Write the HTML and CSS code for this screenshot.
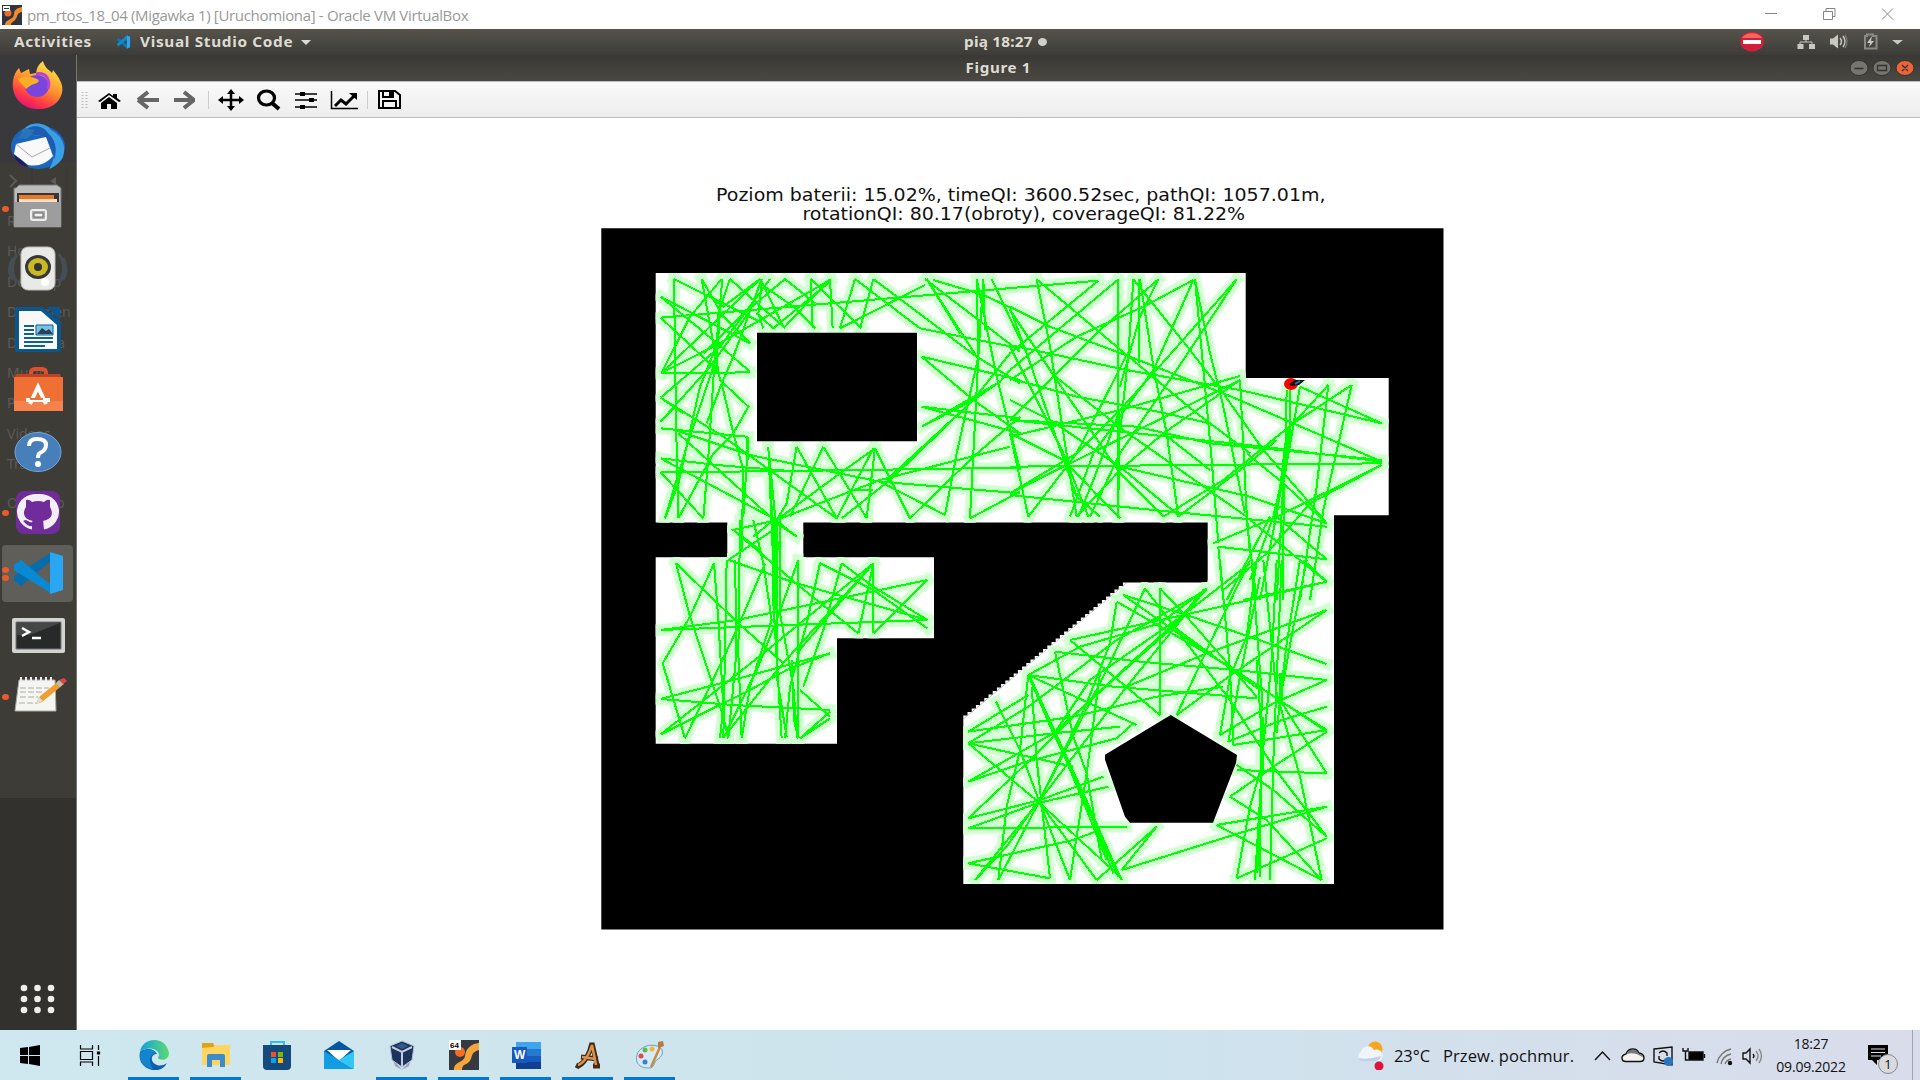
FILE: index.html
```html
<!DOCTYPE html>
<html lang="pl">
<head>
<meta charset="utf-8">
<title>pm_rtos_18_04 (Migawka 1) [Uruchomiona] - Oracle VM VirtualBox</title>
<link rel="stylesheet" href="styles.css">
</head>
<body>
<header class="host-title">
  <svg class="vm-icon" viewBox="0 0 20 20"><path fill="#303440" d="M0 0h20v20H0z"/><path fill="#f58a2a" d="M3 20c0-6 9-5 9-11 0-4 3-6 8-7v5c-6 1-4 5-7 8-2 2-4 2-4 5z"/><circle cx="6" cy="8" r="3.5" fill="#f36b21"/><path fill="#fff" d="M1 1h7v5H1z"/><path stroke="#333" d="M2 3.5h5"/></svg>
  <span class="host-name">pm_rtos_18_04 (Migawka 1) [Uruchomiona] - Oracle VM VirtualBox</span>
  <svg class="host-controls" viewBox="0 0 140 29" fill="none" stroke="#858585"><path d="M1 13.500h12M59.500 11.500h9v8h-9zM62 11V8.500h9v8h-2M118 8.500l11 11m0-11-11 11"/></svg>
</header>

<div class="gnome-bar">
  <span class="activities"><b>Activities</b></span>
  <svg class="code-mini" viewBox="0 0 100 100"><path fill="#0877bd" d="M4 28 15 20 75 70V98L4 38z"/><path fill="#0a8bd7" d="M4 72 15 80 75 30V2L4 62z"/><path fill="#29a8f2" d="M74 2 97 13v74L74 98z"/></svg>
  <span class="app-name"><b>Visual Studio Code</b></span>
  <i class="caret"></i>
  <span class="clock"><b>pią 18:27</b></span><i class="dot"></i>
  <svg class="indicators" viewBox="0 0 180 26">
    <ellipse cx="12" cy="12.500" rx="12" ry="10" fill="#d3203a"/><path d="M2 9a10.500 7 0 0 1 20 0z" fill="#ee6a5c"/><path d="M3 11h18v4H3z" fill="#fff"/>
    <g fill="#c9c7c1"><path d="M63 6h6v5h-6zM57.500 15h6v5h-6zM69 15h6v5h-6z"/><path d="M60 15v-2h12v2M66 10v3" fill="none" stroke="#c9c7c1"/><path d="M90 9.500h3l5-4v14l-5-4h-3z"/><path d="M100 9q3 3.500 0 7M103 7q4 5.500 0 11" fill="none" stroke="#c9c7c1" stroke-width="1.500"/><path d="M105 6q4 6.500 0 13" fill="none" stroke="#77756d" stroke-width="1.500"/><path d="M125 7h2V5.500h6V7h3.500v12.500H125z" fill="none" stroke="#8c8a83" stroke-width="2"/><path d="m132 7-5 7h3l-1 4 5-6h-3z"/><path d="M152 11h11l-5.500 4.500z"/></g>
  </svg>
</div>

<div class="guest">
  <aside class="dock">
    <div class="ghost"><span>Recent</span><span>Home</span><span>Desktop</span><span>Documen</span><span>Downloa</span><span>Music</span><span>Pictures</span><span>Videos</span><span>Trash</span><span class="other">Other Lo</span></div>
    <svg class="ghost-arrows" viewBox="0 0 76 36"><path d="m10 9 6 6-6 6" fill="none" stroke="#5c5a55" stroke-width="2"/><path d="m56 11-6 4 6 4z" fill="#5c5a55"/><path d="M32 0v34M67 0v34" stroke="#383733"/></svg>
    <div class="slot"><svg viewBox="0 0 60 52"><defs><linearGradient id="fx" x1=".8" y1="0" x2=".3" y2="1"><stop stop-color="#fff04a"/><stop offset=".5" stop-color="#ff922e"/><stop offset=".8" stop-color="#ff3647"/><stop offset="1" stop-color="#e3117d"/></linearGradient></defs><path fill="url(#fx)" d="M5 22Q6 14 11 9l2 5 8-4 1 5 6-1c1-6 3-9 7-12 2 8 7 9 9 12l1-3c6 7 11 15 9 23-3 12-15 17-26 16C14 49 3 38 5 22z"/><ellipse cx="29" cy="27" rx="12" ry="11" fill="#7845dd"/><path fill="#ffad24" d="M10 20c7-3 12-3 19 0 3 1 2 4-3 5-4 1-5 3-8 5-3-5-7-6-8-10z"/><path d="M28 15c9-2 15 4 12 15" fill="none" stroke="#b843d6" stroke-width="3"/></svg></div>
    <div class="slot"><svg viewBox="0 0 60 52"><ellipse cx="30" cy="27" rx="27" ry="22" fill="#1b66bd"/><path fill="#3aa0e6" d="M14 12C20 0 38 2 43 10c10 5 16 15 12 27-3 6-9 10-14 12 6-8 7-21-2-30-8-6-18-2-25-7z"/><path fill="#1d5cb0" d="M20 8c8-4 16-1 20 5 7 6 10 16 6 27-1-9-3-17-9-22-6-4-13-2-19-5z"/><path fill="#f9f9fa" d="m8 24 30-7 7 19q-10 12-25 9L6 34z"/><path d="m8 24 16 13 18-9" fill="none" stroke="#a5a5a7"/><path fill="#1e1d63" d="M5 34q8 5 16 13Q9 46 5 34z"/><path fill="#2873b9" d="m10 18 7-10 10 2-8 9z"/></svg></div>
    <div class="slot lower"><i class="run"></i><svg viewBox="0 0 60 52"><path fill="#bcbcbc" stroke="#777" d="m8 6 3-3h38l4 3v39H6V6z"/><path fill="#383632" d="M9 11h42v12H9z"/><path fill="#e87727" d="M11 13h35v8H11z"/><path fill="#f8dec3" d="M11 17h38v5H11z"/><path fill="#9d9d9d" d="M7 20h46v25H7z"/><rect x="23" y="28" width="15" height="10" rx="2" fill="#aaa" stroke="#eee" stroke-width="2"/><path fill="#f2f2f2" stroke="#666" d="M26 31h9v4h-9z"/></svg></div>
    <div class="slot"><svg viewBox="0 0 60 52"><path d="M9 12q-9 14 0 29M51 12q9 14 0 29M5 16q-7 12 0 22M55 16q6 12 0 22" stroke="#454e54" stroke-width="3" fill="none"/><rect x="13" y="5" width="34" height="43" rx="7" fill="#e9e9e7" stroke="#bbb"/><ellipse cx="30" cy="25" rx="13" ry="12" fill="#383838"/><ellipse cx="30" cy="25" rx="10" ry="9" fill="#c9ba24"/><circle cx="30" cy="25" r="4" fill="#333"/><circle cx="37" cy="40" r="4" fill="#fff"/></svg></div>
    <div class="slot lower"><svg viewBox="0 0 60 52"><path fill="#0a568d" d="M10 3h25l18 15v27q0 3-3 3H10q-3 0-3-3V6q0-3 3-3zM39 3h13v13z"/><path fill="#f8f8f8" d="M11 7h22l16 14v24H11z"/><path stroke="#145d91" stroke-width="2" d="M16 22h10M16 26h10M16 30h10M16 34h29M16 38h29M16 42h21"/><path fill="#79c3e8" stroke="#145d91" d="M28 21h17v10H28z"/><path fill="#24445a" d="m29 30 5-6 4 3 3-2 4 5z"/></svg></div>
    <div class="slot lower"><svg viewBox="0 -1 60 52"><path d="M23 14V7q0-4 4-4h7q4 0 4 4v7" fill="none" stroke="#dc512a" stroke-width="4"/><path fill="#bf4226" d="m8 8-2 5h48l-2-5z"/><path fill="#ee7035" d="M6 11h49v34H6z"/><path fill="#f5814d" d="M6 35h49v10H6z"/><path d="m22 38 8-17 8 17M18 34h24" fill="none" stroke="#fff" stroke-width="4"/><path d="M22 33h13" stroke="#ed6f35" stroke-width="2"/></svg></div>
    <div class="slot lower"><svg viewBox="0 0 60 52"><ellipse cx="30" cy="26" rx="23" ry="19.500" fill="#477fba" stroke="#75a6d6"/><path d="M21 20q0-7 8-7 9 0 9 6 0 5-6 8-2 1-2 5" fill="none" stroke="#fff" stroke-width="4"/><circle cx="30" cy="38" r="3" fill="#fff"/></svg></div>
    <div class="slot"><i class="run"></i><svg viewBox="0 1 60 52"><rect x="8" y="6" width="44" height="43" rx="8" fill="#702c9b"/><path fill="#f4eff6" d="M30 9a19 18 0 0 0-6 35.500v-5c-5 1-6-2-8-4 4-1 4 2 8 2l1-3h10l1 10A19 18 0 0 0 30 9z"/><path fill="#702c9b" d="M18 15q3-1 6 2 6-2 12 0 3-3 6-2v7c5 9-1 13-7 14v9H25v-4c-6 1-7-3-10-5 4-1 5 2 10 2v-2c-7-1-12-6-7-14z"/></svg></div>
    <div class="slot active"><i class="run two"></i><svg viewBox="0 0 60 52"><path fill="#066dad" d="m6 34 7 5 31-26V5L6 29z"/><path fill="#0989d4" d="m6 18 7-5 31 26v8L6 23z"/><path fill="#2aa7f4" d="m42 5 13 4v34l-13 4z"/></svg></div>
    <div class="slot lower"><svg viewBox="0 0 60 52"><rect x="4" y="9" width="53" height="35" rx="2" fill="#d3d3d1"/><path fill="#272a29" stroke="#777" d="M8 13h45v27H8z"/><path fill="#444746" d="M9 14h43L22 26H9z"/><path d="m14 19 7 4-7 4M24 29h9" fill="none" stroke="#fff" stroke-width="2.500"/></svg></div>
    <div class="slot lower"><i class="run"></i><svg viewBox="0 0 60 52"><path fill="#f5f5f1" stroke="#aaa" d="M11 10h36l1 31H7z"/><path d="M13 7v5M18 7v5M23 7v5M28 7v5M33 7v5M38 7v5M43 7v5" stroke="#eee" stroke-width="2"/><path d="M12 18h29M12 22h24M12 27h18M11 33h17" stroke="#aaa" stroke-dasharray="6 2"/><path fill="#ef9e31" d="m28 34 3-7 21-17 4 4-22 18z"/><path fill="#ddd" d="m28 34 3-7 4 4z"/><path fill="#bbb" d="m48 13 3-3 4 4-3 3z"/><path fill="#e0444c" d="m51 10 5-2 3 3-4 3z"/></svg></div>
    <svg class="apps" viewBox="0 0 40 34" fill="#eee"><circle cx="6" cy="6" r="3.300"/><circle cx="19.500" cy="6" r="3.300"/><circle cx="33" cy="6" r="3.300"/><circle cx="6" cy="17" r="3.300"/><circle cx="19.500" cy="17" r="3.300"/><circle cx="33" cy="17" r="3.300"/><circle cx="6" cy="28" r="3.300"/><circle cx="19.500" cy="28" r="3.300"/><circle cx="33" cy="28" r="3.300"/></svg>
  </aside>

  <main class="figure-window">
    <div class="figure-title"><span></span><b>Figure 1</b>
      <svg viewBox="0 0 68 20"><g stroke="#34332f"><ellipse cx="10" cy="10" rx="9" ry="7.500" fill="#77756e"/><ellipse cx="33" cy="10" rx="9" ry="7.500" fill="#77756e"/><ellipse cx="56" cy="10" rx="9" ry="7.500" fill="#ed6438"/><path d="M5.500 10.500h9M28.500 7.500h9v5h-9zM53 7l6 6m0-6-6 6" fill="none" stroke-width="1.300"/></g></svg>
    </div>
    <div class="toolbar">
      <svg viewBox="0 1 340 36">
        <path d="M5.500 11v16M9.500 11v16" stroke="#bbb" stroke-width="2" stroke-dasharray="1 2"/>
        <path d="m21 20 11-8 4 3v-2h4v4l4 3-2 1-10-7-9 7zM24 22l8-6 8 6v6h-6v-5h-4v5h-6z"/>
        <path d="m61 19 10-8M61 19h21M61 19l10 8" fill="none" stroke="#666" stroke-width="4"/>
        <path d="m117 19-10-8M118 19H97M117 19l-10 8" fill="none" stroke="#666" stroke-width="4"/>
        <path d="M131.500 10v18M290.500 10v18" stroke="#ccc"/>
        <path d="M144 19h20M154 10v18" stroke="#000" stroke-width="2.500"/><path d="m141 19 5-4v8zm26 0-5-4v8zM154 8l-4 5h8zm0 22-4-5h8z"/>
        <ellipse cx="189.500" cy="17" rx="8" ry="7" fill="none" stroke="#000" stroke-width="3.200"/><path d="m195 22 7 6" stroke="#000" stroke-width="4"/>
        <path d="M218 13h22M218 19h22M218 26h22" stroke="#000" stroke-width="1.500"/><path d="M223 11h5v4h-5zM232 17h5v4h-5zM223 24h5v4h-5z"/>
        <path d="M254.500 10v17.500H281" fill="none" stroke="#000" stroke-width="1.500"/><path d="m258 25 6-6 5 4 9-9" fill="none" stroke="#000" stroke-width="3"/><path d="M272 12h8v7z"/>
        <path d="M302 10h16l5 4v13h-21zM306 10v6h10v-6M306 27v-7h13v7" fill="none" stroke="#000" stroke-width="2"/><path d="M312 11h3v4h-3z"/>
      </svg>
    </div>
    <div class="canvas">
      <svg class="plot" viewBox="590 180 870 760">
        <defs>
          <clipPath id="floor"><path d="M655.700 273H1245.700V378H1388.700V515.300H1334V884H963.300V719L1127.300 582.300H1207.700V522.500H803.300V557.300H934V638.300H837V743.700H655.700V557.300H727.300V522.500H655.700Z"/></clipPath>
          <path id="stairs" class="room" d="M0 0v-3.500h4.200zm4.200-3.500v-3.500h4.200zm4.200-3.500v-3.500h4.200zm4.200-3.500v-3.500h4.200zm4.200-3.500v-3.500h4.200zm4.200-3.500v-3.500h4.200zm4.200-3.500v-3.500h4.200zm4.200-3.500v-3.500h4.200zm4.200-3.500v-3.500h4.200zm4.200-3.500v-3.500h4.200zm4.200-3.500v-3.500h4.200zm4.200-3.500v-3.500h4.200zm4.200-3.500v-3.500h4.200z"/>
          <g id="tracks" fill="none">
            <path transform="translate(590 170) scale(.33333)" d="M252 327L258 750L265 1045M252 327L510 455M212 380L480 520M212 380L370 510L480 605M212 443L1525 332M212 443L370 590M212 610L480 607M215 608L300 440L395 327M215 608L380 525L720 330M215 608L510 327M212 683L390 530L540 327M212 683L400 800L740 1045M212 755L360 590L475 430M212 683L280 730M212 755L255 710M212 775L470 800L475 870M212 865L380 885L600 903L1290 893M212 865L550 1045M212 907L600 903M212 907L340 1045M265 790L540 1040M255 780L480 855L870 935L1290 970M225 1045L265 940L330 650L380 525M265 1045L370 850L430 790L475 710L390 630L335 327M340 1045L355 860L372 600L397 327M390 420L378 610M225 1045L290 830L370 590M335 327L400 440L480 520M420 327L385 430L380 610M420 327L580 470M510 327L400 410L360 380M515 327L430 560L395 640L350 760M515 335L580 470M585 327L450 440L340 550M585 327L675 400M662 327L668 475M662 327L815 475M720 327L728 475M720 327L580 475M720 335L550 475L500 430M675 475L610 410L510 340M795 327L750 475M850 327L810 475M795 327L990 475L1290 535M850 327L1160 560L1290 640M750 475L1005 345M1005 327L1290 545M1030 330L1180 375L1260 412M395 640L430 790L460 900L455 1140M475 800L460 1040M535 830L548 1140M538 860L565 1140M540 900L550 1130M515 340L505 430L520 475M620 830L590 1000L560 1050M620 830L740 1045M700 830L600 1040M700 830L830 1045M855 835L750 910L560 1050M855 835L830 1045M855 835L960 1045M850 835L740 1045M960 1045L1150 860L1290 740M1065 1035L1100 850L1165 560L1180 327M870 935L1065 1035M560 1050L870 930L1260 830M1140 1045L1150 850L1165 560L1160 330M1140 1045L1290 965M995 560L1290 630M995 560L1150 690L1290 790M995 710L1290 745M995 710L1290 790M995 770L1230 635L1260 600M995 770L1150 690M755 1045L900 930L1150 690L1260 550M890 930L1150 690L1230 635M1010 327L1160 560M1015 335L1110 490M1205 327L1310 550M1160 327L1220 620L1290 900M1180 327L1185 480M780 960H850M560 1050L430 1080L510 1140M550 1045L620 1100M490 1100L550 1050"/>
            <path transform="translate(1010 220) scale(.33333)" d="M265 182L0 400M325 178L120 350L0 450M325 178V895M328 580V810M80 178L120 380L160 640L200 890M80 178L350 405L560 580L720 700M0 260L120 320L360 410L640 520L850 610L1115 725M0 265L50 400L200 830L270 890M370 178L355 405L330 640M388 178V430M370 178L540 390L640 520M445 178L270 330L0 600M445 178L390 290L330 500M390 178L430 440L470 640L505 890M550 180L400 260L200 350L0 480M550 180L430 450L250 700L180 890M555 178L600 400L640 560L705 880M555 178L585 500L605 720L625 970M680 178L430 460L330 570L200 700L0 820M680 178L540 390L330 700L240 890M690 468L330 570L0 650M690 480L460 640L330 750L200 890M690 480L710 880L720 1000M610 970L800 890L1115 735M625 980L950 1018M0 375L350 450L690 510L1115 610M830 510L825 740L790 890L720 1080M840 510L840 640L800 880L750 1140M835 620L822 770L795 890M830 640L800 890M870 500L1115 610M870 500L820 790L800 1140M822 790L818 1140M955 495L850 610M955 495L920 800L870 1140M1025 495L850 610L640 780L460 890M1025 495L940 870L900 1140M0 600L380 620L600 670L1115 720M0 740L1115 730M0 825L430 870L950 920M0 820L160 740L690 480M1115 725L760 680L475 650L0 600M55 890L0 640M55 890L200 700L350 405M205 890L250 780L330 570M235 890L160 700L0 380M460 890L330 760L130 465L0 270M505 890L690 750L800 660M0 475L200 530L420 570L600 610M130 465L340 630L710 890M330 740L720 830L950 910M0 540L120 600L330 740L510 890M640 520L760 690L900 850L950 910M460 640L600 750M710 700L820 790L950 910M720 900L950 1085M800 890L950 1018M950 1085L700 1140M625 980L640 1140M710 900L740 1140M640 1110L770 1000L900 850L1115 735M780 890L650 1140M0 640L160 720L330 895"/>
            <path transform="translate(590 520) scale(.33333)" d="M258 130L300 290L400 590L415 655M258 130L440 305L580 430M372 130L300 290L218 430L285 655M372 130L385 300L400 560L390 655M285 655L440 330L525 130M212 330L440 300L1012 180M212 330L600 315L1012 300M212 537L430 480L720 400M212 537L430 555L720 570M212 643L520 400L850 130M212 643L480 510L590 450M410 120L400 655M435 120L440 390L415 655M450 0L445 400L455 655M415 120L620 190L1012 300M430 30L560 0M430 30L630 200L805 340M415 120L550 30M490 0L520 130L545 300L480 500L455 655M548 0L550 250L575 655M555 0V270M560 0L562 480L590 650M570 0L570 280L610 500L622 655M605 420L612 600L625 655M437 250V400M625 120L560 300L500 450L400 655M625 120V655M690 130L650 310L600 500L585 655M690 130L850 210L1012 325M755 130L700 330L640 500M755 130L850 200L1012 300M850 130L805 340M850 130V340M850 340L1012 180M850 130L570 440L410 640M850 130L620 400M630 510L720 590M630 655L720 575M630 655L720 595M590 450L720 400M560 10L620 50"/>
            <path transform="translate(940 560) scale(.33333)" d="M390 240L730 165L930 120L1160 65M390 240L660 465M660 85V465M345 275L600 305L890 330L1160 360M345 275L400 530L440 640L485 900M265 345L520 380L950 415M265 345L590 495M265 345L340 520L430 700L520 940M270 350L345 520L432 730L500 900M275 370L360 560L440 730L545 960M280 375L375 590L460 780L535 950M285 385L430 700L530 930M265 345L240 570L200 740L175 960M275 380L290 600L330 955M168 425L240 570L300 730L390 960M85 515L265 405M85 515L400 470L650 410L850 380M85 550L265 440L530 240L800 90M85 550L400 620M85 550L300 730L470 960M300 730L540 950M85 550L340 520L540 500M85 665L340 520L700 200L790 90M85 665L260 605L530 535L580 490M85 775L265 605L440 430L730 165L930 10M85 775L300 720L490 650M85 805L290 730L505 680M85 805L560 800M85 910L400 840L480 810M85 910L330 955M105 960L300 720L440 430L510 250L530 125M105 960L200 860L310 700M175 960L310 700L500 330L615 85M390 960L410 830L440 640L480 340M470 960L650 800M545 930L650 800M545 930L880 825L1160 740M530 125L870 320L1025 425L1160 515M550 105L700 210L880 330M550 105L740 165L1000 255L1160 312M615 85L870 420L1000 620L1160 830M660 85L740 170L950 410M800 85L660 190L420 260L265 345M800 85L560 380L300 720M710 465L800 270L930 0M710 465L880 340L1160 150M560 380L800 280L1160 150M840 525L870 350L920 230L950 0M840 525L1000 430L1160 360M865 545L900 350L960 50M865 545L1025 480L1160 440M880 555L1160 510M880 555L870 330L840 0M890 615L1000 690L1160 830M890 630L1160 640M870 710L1000 620L1160 515M870 710L980 780L1145 960M830 795L980 770L1160 740M830 795L1145 960M890 955L1160 835M890 955L930 740L970 600L950 300M945 960L970 560L995 300L1010 0M968 470V640M964 600L955 920M950 940L965 640M990 960L1000 600L1025 0M960 950L965 400L935 0M1145 960L1080 650L1010 400L970 0M1100 0L1060 200L1020 420L1010 520M1080 0L1040 250L1020 420L1160 640M1020 340V425M1026 340V425M1090 0L1160 65M1025 425L1160 510M700 200L850 310L960 390M350 510L450 360L730 165"/>
          </g>
        </defs>
        <path class="wall" d="M601.300 228.300H1443.500V929.500H601.300z"/>
        <path class="room" d="M655.700 273H1245.700V378H1388.700V515.300H1334V884H963.300V719L1127.100 582.500H1207.700V522.500H803.300V557.300H934V638.300H837V743.700H655.700V557.300H727.300V522.500H655.700Z"/>
        <use href="#stairs" x="963.300" y="719"/><use href="#stairs" x="1017.900" y="673.500"/><use href="#stairs" x="1072.500" y="628"/>
        <g clip-path="url(#floor)"><use href="#tracks" class="halo-edge"/><use href="#tracks" class="halo"/><use href="#tracks" class="line"/></g>
        <path class="wall" d="M757 332.700h160v108.600H757zM1170.700 715l66.300 40-1 8-23 59.700h-83l-5-6-20-57v-5z"/>
        <ellipse cx="1291" cy="384" rx="7" ry="6" fill="red"/><path d="m1289 384 6-4 10 0-6 5-8 1z" fill="#111"/><path d="m1295 384 5-3" stroke="#2179b5" stroke-width="2"/>
        <text x="716" y="200.500" textLength="609.500" lengthAdjust="spacingAndGlyphs">Poziom baterii: 15.02%, timeQI: 3600.52sec, pathQI: 1057.01m,</text>
        <text x="802.500" y="219.500" textLength="442.500" lengthAdjust="spacingAndGlyphs">rotationQI: 80.17(obroty), coverageQI: 81.22%</text>
      </svg>
    </div>
  </main>
</div>

<footer class="taskbar">
  <div class="task start"><svg viewBox="0 0 30 30"><path d="m5 8 8-1v8H5zM14 7l11-2v10H14zM5 16h8v8l-8-1zM14 16h11v10l-11-2z"/></svg></div>
  <div class="task view"><svg viewBox="0 0 30 30" fill="none" stroke="#000" stroke-width="1.200"><path d="M5.500 5v4h12V5M5.500 11.500h12v8h-12zM5.500 26v-4h12v4M23.500 5v5M23.500 16v10"/><path fill="#000" d="M22.500 12h2v2h-2z"/></svg></div>
  <div class="task open"><svg viewBox="0 0 30 30"><defs><linearGradient id="eg"><stop stop-color="#159fe0"/><stop offset="1" stop-color="#59db70"/></linearGradient></defs><path fill="#0c61ac" d="M1 12c6-5 14-3 17 2-6 0-7 7-2 10 5 3 9 1 12-1-3 6-9 8-15 7C4 28-1 21 1 12z"/><path fill="url(#eg)" d="M1 12C3-3 27-5 30 13c0 6-5 8-10 6-2-1 0-2 0-5-2-6-12-8-19-2z"/><path fill="#1484ce" d="M1 13c6-6 14-4 16 0-7 2-8 9-3 16C4 28 0 21 1 13z"/></svg></div>
  <div class="task open"><svg viewBox="0 0 30 30"><path fill="#e2a313" d="M1 3h11l2 4v4H1z"/><path fill="#ffd561" d="M1 8 12 7l3-2h14v20H1z"/><path fill="#398ccc" d="M6 27V16q0-2 2-2h14q2 0 2 2v11h-5v-7h-8v7z"/></svg></div>
  <div class="task"><svg viewBox="0 0 30 30"><path d="M9 8V2h13v6" fill="none" stroke="#31bef3" stroke-width="2"/><path fill="#174a7c" d="M1 5h28v21q0 4-4 4H5q-4 0-4-4z"/><path fill="#f25022" d="M9 12h5v5H9z"/><path fill="#7fba00" d="M16 12h5v5h-5z"/><path fill="#00a4ef" d="M9 18h5v5H9z"/><path fill="#ffb900" d="M16 18h5v5h-5z"/></svg></div>
  <div class="task"><svg viewBox="0 0 30 30"><path fill="#0757a0" d="M0 11 15 1l15 10v9H0z"/><path fill="#fff" d="M3 10h24L15 21z"/><path fill="#129de2" d="M0 11l30 18H0z"/><path fill="#31c6f4" d="M30 11v18L15 20z"/></svg></div>
  <div class="task open"><svg viewBox="0 0 30 30"><path fill="#9aa5b5" d="M6 19 15 30l9-11-2 7-7 4-7-4z"/><path fill="#1d355c" stroke="#b3c1d3" d="m3 6 12-5 12 5-2 14-10 7-10-7z"/><path d="m5 7 10 5 10-5M15 12v14" stroke="#c1cede" fill="none" stroke-width="2"/><path fill="#345987" d="m9 6 6-3 6 3-6 3z"/></svg></div>
  <div class="task open"><svg viewBox="0 0 30 30"><path fill="#353a42" d="M0 0h30v30H0z"/><path fill="#f6a53b" d="M5 30c0-9 10-7 11-14C17 8 22 4 30 3v7c-9 2-6 8-10 12-3 3-7 2-7 8z"/><circle cx="11" cy="12" r="5" fill="#f56e24"/><path fill="#fff" d="M0 0h12v10H0z"/><text x="1" y="8" class="tiny">64</text></svg></div>
  <div class="task open"><svg viewBox="0 0 30 30"><path fill="#2479d0" d="M5 2h25v27H5z"/><path fill="#41a5ee" d="M5 2h25v7H5z"/><path fill="#185abd" d="M5 16h25v7H5z"/><path fill="#103f91" d="M5 22h25v7H5z"/><path fill="#185abd" d="M1 7h15v16H1z"/><text x="3" y="19" class="word">W</text></svg></div>
  <div class="task open"><svg viewBox="0 0 30 30"><path d="M4 26c7-1 13-13 15-23l5 22M8 17l17 2M3 25l4 2M20 26h7" fill="none" stroke="#462813" stroke-width="5"/><path d="M5 25c7-2 12-13 14-20l4 20M9 17l14 2" fill="none" stroke="#d8954e" stroke-width="2.500"/></svg></div>
  <div class="task open"><svg viewBox="0 0 30 30"><path fill="#d6eaf7" stroke="#6a9dc0" d="M2 22C-1 10 11 3 22 6c9 3 5 11 1 13-5 3-3 9-9 9-7 0-10-2-12-6z"/><circle cx="6" cy="16" r="2.500" fill="#e24848"/><circle cx="10" cy="10" r="2.500" fill="#63bd45"/><circle cx="17" cy="9" r="2.500" fill="#edbd2d"/><circle cx="10" cy="22" r="2.500" fill="#3482d4"/><path d="M16 27 25 7" stroke="#c88b42" stroke-width="2.500"/><path fill="#b27a46" d="m23 8 0-6 5-1 1 5z"/></svg></div>
  <div class="weather">
    <svg viewBox="0 0 28 30"><circle cx="19" cy="9" r="7.500" fill="#f9a51e"/><path fill="#f0f5fc" d="M5 21a5 5 0 0 1 0-9 7 7 0 0 1 13-2 6 6 0 0 1 5 11z"/><path fill="#bfd0ea" d="M2 18q10 2 23-2-1 5-6 5H6q-3 0-4-3z"/><circle cx="23" cy="26" r="4.500" fill="#df1237"/></svg>
    <span class="temp">23°C</span><span class="forecast">Przew. pochmur.</span>
  </div>
  <svg class="tray" viewBox="0 0 180 30" fill="none" stroke="#111" stroke-width="1.400">
    <path d="m3 19 7.500-8 7.500 8"/><path fill="#f3f3f1" d="M34 20.500q-4 0-4-3.500 0-3 4-4 2-5 7-5 4 0 6 4 5 1 5 5 0 3.500-4 3.500z"/><path fill="#777" stroke="none" d="M34.500 13q2-4.500 6.500-4.500 4 0 5.500 4 4 1 4.500 4-8-6-16.500-3.500z"/>
    <path d="m62 8 18-2v18l-18-3zM67 12q4-4 8 0v3M75 18q-4 4-8 0v-3"/><circle cx="76.500" cy="20.500" r="4.500" fill="#2876bd" stroke="none"/>
    <path fill="#000" d="M97 11h14v8H97z"/><path d="M112.500 13v4M91 7v3h5V7M93.500 10v9h3"/>
    <path d="M125 22A18 18 0 0 1 139 8M129 23A13 13 0 0 1 139 13M133 23A8 8 0 0 1 139 18" stroke="#777"/><circle cx="138" cy="22" r="1.500" fill="#111"/>
    <path d="M151 12h3l4-4v14l-4-4h-3z"/><path d="M161 13q2 2 0 4"/><path d="M164 10q4 5 0 10M167 8q5 7 0 14" stroke="#888"/>
  </svg>
  <div class="time"><span>18:27</span><span>09.09.2022</span></div>
  <div class="notice"><svg viewBox="0 0 22 22"><path d="M1 1h20v15H10v5l-5-5H1z"/><path d="M4 5h14M4 8.500h14M4 12h10" stroke="#d8dfeb"/></svg><b>1</b></div>
  <i class="peek"></i>
</footer>
</body>
</html>
```
FILE: styles.css
```css
* { box-sizing: border-box; }
body { margin: 0; width: 1920px; height: 1080px; overflow: hidden; display: flex; flex-direction: column; background: #fff; font-family: "Open Sans", "Noto Sans", sans-serif; }
svg { display: block; flex: none; }
.host-title { height: 29px; flex: none; display: flex; align-items: center; padding-left: 2px; color: #999; font-size: 15px; }
.vm-icon { width: 20px; height: 20px; margin-right: 5px; }
.host-name { letter-spacing: -0.33px; white-space: nowrap; }
.host-controls { width: 140px; height: 29px; margin-left: auto; margin-right: 16px; }
.gnome-bar { height: 26px; flex: none; display: flex; align-items: center; padding-left: 14px; background: linear-gradient(#55534b, #3d3c38); color: #dfdbd2; font: 13.5px "Noto Sans", sans-serif; letter-spacing: .6px; white-space: nowrap; }
.gnome-bar b { display: inline-block; transform: scaleX(1.135); transform-origin: left; }
.activities { width: 101px; }
.code-mini { width: 17px; height: 14px; margin-right: 8px; }
.app-name { width: 155px; }
.caret { border: 5px solid transparent; border-top-color: #dfdbd2; border-bottom: 0; margin-left: 6px; }
.clock { margin-left: 653px; width: 71px; letter-spacing: .2px; }
.dot { width: 9px; height: 8px; border-radius: 50%; background: #d2d0ca; margin-left: 3px; }
.indicators { width: 180px; height: 26px; margin-left: auto; }
.guest { height: 975px; flex: none; display: flex; }
.dock { position: relative; width: 77px; flex: none; display: flex; flex-direction: column; border-right: 1px solid #77756f; background: linear-gradient(#39383a 0 107px, #3e3c37 107px 743px, #32312d 743px); }
.ghost { position: absolute; left: 7px; top: 151px; width: 69px; display: flex; flex-direction: column; color: #5b5a55; font: 14px/30.4px "Noto Sans", sans-serif; white-space: nowrap; }
.other { margin-top: 8px; }
.ghost-arrows { position: absolute; left: 0; top: 111px; width: 76px; height: 36px; }
.slot { position: relative; top: -1px; height: 61px; flex: none; display: flex; align-items: center; justify-content: center; }
.slot svg { width: 60px; height: 52px; }
.slot.lower { top: 0; }
.slot.active::before { content: ""; position: absolute; left: 2px; top: 3px; width: 71px; height: 57px; border-radius: 4px; background: #605e59; }
.slot.active svg { position: relative; }
.run { position: absolute; z-index: 1; left: 2px; top: 29px; width: 7px; height: 6px; border-radius: 50%; background: #ea5b29; }
.run.two { top: 25px; box-shadow: 0 8px #ea5b29; }
.apps { width: 40px; height: 34px; margin: auto 0 14px 18px; }
.figure-window { flex: 1; display: flex; flex-direction: column; }
.figure-title { height: 26px; flex: none; display: grid; grid-template-columns: 1fr auto 1fr; align-items: center; background: linear-gradient(#393834, #4a4842); color: #dfdbd2; font: 13.5px "Noto Sans", sans-serif; letter-spacing: .6px; }
.figure-title b { transform: scaleX(1.12); }
.figure-title svg { width: 68px; height: 20px; justify-self: end; margin-right: 3px; }
.toolbar { height: 37px; flex: none; border-top: 1px solid #bbb; border-bottom: 1px solid #bcbcbc; background: linear-gradient(#fafafa, #ededed); }
.toolbar svg { width: 340px; height: 36px; }
.canvas { flex: 1; padding: 62px 0 0 513px; background: #fff; }
.plot { width: 870px; height: 760px; }
.plot text { font: 17px "DejaVu Sans", sans-serif; fill: #111; }
.wall { fill: #000; }
.room { fill: #fff; }
.halo-edge { stroke: #e5ffe5; stroke-width: 37px; stroke-linejoin: round; stroke-linecap: square; }
.halo { stroke: #d1ffd1; stroke-width: 31px; stroke-linejoin: round; stroke-linecap: square; }
.line { stroke: #00ff00; stroke-width: 6px; shape-rendering: crispEdges; }
.taskbar { height: 50px; flex: none; display: flex; background: linear-gradient(90deg, #cfe7ef, #cde3ed 60%, #d5dfec 80%, #d9dceb); color: #111; white-space: nowrap; }
.task { width: 62px; flex: none; display: flex; align-items: center; justify-content: center; }
.task.start { width: 60px; }
.task.view { width: 59px; margin-right: 3px; }
.task svg { width: 30px; height: 30px; }
.task.open { width: 51px; margin: 0 5px 0 6px; box-shadow: inset 0 -3px #0078d7; }
.tiny { font: bold 8px "Liberation Sans", sans-serif; }
.word { font: bold 12px "Liberation Sans", sans-serif; fill: #fff; }
.weather { display: flex; align-items: center; margin-left: 676px; width: 230px; flex: none; font-size: 16.5px; }
.weather svg { width: 28px; height: 30px; margin-right: 10px; }
.temp { width: 49px; letter-spacing: -.1px; }
.forecast { letter-spacing: .1px; }
.tray { width: 180px; height: 30px; margin: 11px 0 0 6px; }
.time { width: 80px; flex: none; display: flex; flex-direction: column; align-items: center; margin-left: -1px; padding-top: 2px; font-size: 14px; line-height: 23px; letter-spacing: -.2px; }
.notice { position: relative; width: 45px; flex: none; margin-left: 16px; padding-top: 14px; }
.notice svg { width: 22px; height: 22px; }
.notice b { position: absolute; left: 11px; top: 24px; width: 20px; height: 20px; border: 1px solid #888; border-radius: 50%; background: #d8dade; text-align: center; font: 13px/18px "Open Sans", sans-serif; }
.peek { width: 1px; background: #9da5b0; }
```
